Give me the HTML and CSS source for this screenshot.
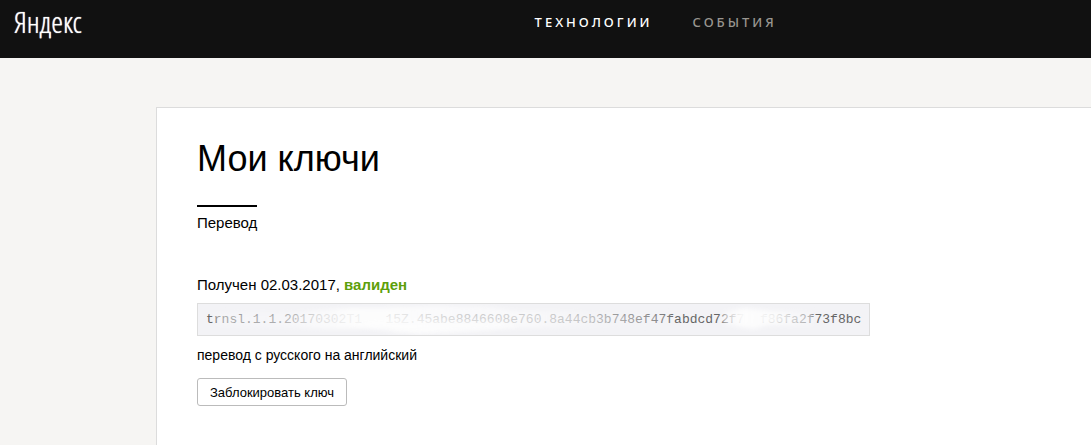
FILE: index.html
```html
<!DOCTYPE html>
<html lang="ru">
<head>
<meta charset="utf-8">
<title>Мои ключи</title>
<link rel="stylesheet" href="styles.css">
</head>
<body>
<header class="header">
  <a class="logo" href="#">Яндекс</a>
  <nav class="nav">
    <a class="nav-link nav-link-active" href="#">ТЕХНОЛОГИИ</a>
    <a class="nav-link" href="#">СОБЫТИЯ</a>
  </nav>
</header>
<main class="panel">
  <h1 class="title">Мои ключи</h1>
  <h2 class="service">Перевод</h2>
  <p class="status">Получен 02.03.2017, <strong class="valid">валиден</strong></p>
  <div class="key">
    <code class="key-text">trnsl.1.1.20170302T1   15Z.45abe8846608e760.8a44cb3b748ef47fabdcd72f7  f86fa2f73f8bc</code>
    <svg class="smudge" viewBox="0 0 671 31" preserveAspectRatio="none" aria-hidden="true">
      <defs>
        <filter id="soft" x="-10%" y="-30%" width="120%" height="160%"><feGaussianBlur stdDeviation="2"/></filter>
        <linearGradient id="fade" x1="0" x2="1">
          <stop offset="0" stop-color="#f8f8fa" stop-opacity=".45"/>
          <stop offset=".15" stop-color="#f9f9fb" stop-opacity=".5"/>
          <stop offset=".23" stop-color="#fbfbfc" stop-opacity=".8"/>
          <stop offset=".3" stop-color="#fdfdfd" stop-opacity=".92"/>
          <stop offset=".4" stop-color="#fdfdfd" stop-opacity=".86"/>
          <stop offset=".56" stop-color="#fcfcfd" stop-opacity=".68"/>
          <stop offset=".7" stop-color="#fbfbfc" stop-opacity=".72"/>
          <stop offset=".82" stop-color="#f6f6f8" stop-opacity=".65"/>
          <stop offset="1" stop-color="#f4f4f6" stop-opacity=".2"/>
        </linearGradient>
        <linearGradient id="fade-end" x1="0" x2="1">
          <stop offset="0" stop-color="#fcfcfd" stop-opacity=".5"/>
          <stop offset=".2" stop-color="#fdfdfd" stop-opacity=".95"/>
          <stop offset=".55" stop-color="#fdfdfd" stop-opacity=".93"/>
          <stop offset="1" stop-color="#f7f7f9" stop-opacity=".5"/>
        </linearGradient>
      </defs>
      <path filter="url(#soft)" fill="url(#fade)" d="M15 9 50 8 100 8 150 4 180 4 240 2 290 3 320 7 360 7 410 9 472 9 472 21 420 22 370 23 320 24 270 28 220 30 190 24 130 25 80 23 20 22Z"/>
      <path filter="url(#soft)" fill="url(#fade-end)" d="M524 8 546 4 572 7 615 8 615 22 570 21 555 25 524 20Z"/>
      <path filter="url(#soft)" fill="#fdfdfd" fill-opacity=".6" d="M150 20 180 16 300 17 320 23 270 26 200 29Z"/>
    </svg>
  </div>
  <p class="description">перевод с русского на английский</p>
  <button class="button" type="button">Заблокировать ключ</button>
</main>
</body>
</html>
```
FILE: styles.css
```css
* {
  box-sizing: border-box;
}

body {
  margin: 0;
  background: #f6f5f3;
  color: #000;
  font-family: "Liberation Sans", Arial, sans-serif;
  font-size: 15px;
  line-height: 20px;
  overflow: hidden;
}

.header {
  display: grid;
  grid-template-columns: 49% 1fr;
  height: 58px;
  background: #111;
}

.logo {
  padding: 4px 0 0 14px;
  color: #fff;
  font-family: "Open Sans Condensed Light", "Open Sans Condensed", "DejaVu Sans Condensed", sans-serif;
  font-size: 30px;
  font-weight: 300;
  line-height: 36px;
  text-decoration: none;
  text-shadow: 0 0 1px #fff;
}

.nav {
  display: flex;
  gap: 40px;
  padding-top: 12px;
}

.nav-link {
  color: #999690;
  font-family: "Noto Sans", "Open Sans", sans-serif;
  font-size: 13px;
  font-weight: 500;
  letter-spacing: 3px;
  text-decoration: none;
}

.nav-link-active {
  color: #fff;
}

.panel {
  min-height: calc(100vh - 107px);
  margin: 49px 0 0 156px;
  padding: 29px 40px 39px;
  border: 1px solid #dcdcdc;
  border-right: 0;
  border-bottom: 0;
  background: #fff;
}

.title {
  margin: 0 0 24px;
  font-size: 36px;
  font-weight: 400;
  line-height: 44px;
}

.service {
  width: fit-content;
  margin: 0 0 42px;
  padding-top: 6px;
  border-top: 2px solid #000;
  font-size: 15px;
  font-weight: 400;
}

.status {
  margin: 0 0 8px;
}

.valid {
  color: #5d9f0b;
}

.key {
  position: relative;
  width: fit-content;
  padding: 6px 8px;
  border: 1px solid #ddd;
  background: #f3f3f6;
}

.key-text {
  display: block;
  color: #666;
  font-family: "Liberation Mono", monospace;
  font-size: 13px;
  line-height: 19px;
  white-space: pre;
}

.smudge {
  position: absolute;
  inset: 0;
  width: 100%;
  height: 100%;
}

.description {
  margin: 9px 0 13px;
  font-size: 14px;
}

.button {
  height: 28px;
  padding: 0 12px;
  border: 1px solid #bbb;
  border-radius: 3px;
  background: #fff;
  color: #000;
  font: 13px "Liberation Sans", Arial, sans-serif;
}
```
